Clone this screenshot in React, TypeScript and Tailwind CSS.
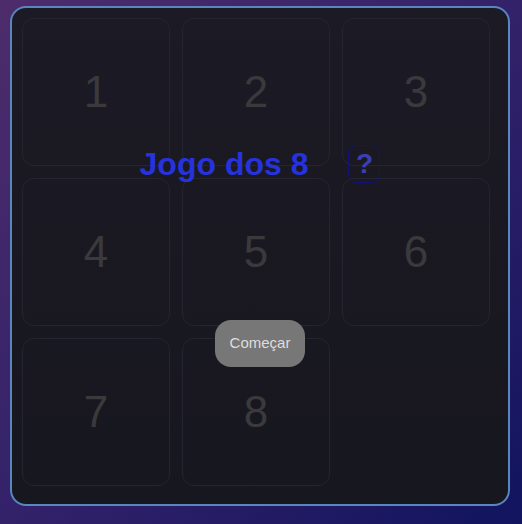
import React from "react";

export default function App() {
  const tiles = [1, 2, 3, 4, 5, 6, 7, 8, null];
  return (
    <div
      className="w-[522px] h-[524px] bg-[linear-gradient(135deg,#4d2c6b_0%,#33226a_50%,#11145e_100%)] pl-[10px] pt-[6px]"
      style={{ fontFamily: '"Liberation Sans", Arial, sans-serif' }}
    >
      <div className="relative w-[500px] h-[500px] rounded-[16px] border-2 border-[#5a86bf] bg-[linear-gradient(180deg,#1c1a24_0%,#17171f_100%)] p-[10px]">
        <div className="grid grid-cols-[repeat(3,148px)] grid-rows-[repeat(3,148px)] gap-[12px]">
          {tiles.map((t, i) =>
            t === null ? (
              <div key={i} />
            ) : (
              <div
                key={i}
                className="flex items-center justify-center rounded-[12px] border border-[#25252f] text-[44px] text-[#3a3a3c]"
              >
                {t}
              </div>
            )
          )}
        </div>
        <div className="absolute inset-0 flex flex-col items-center justify-center gap-[137px]">
          <div className="flex items-center gap-[40px] h-[38px]">
            <span className="text-[32px] font-bold text-[#2633dd] leading-none">Jogo dos 8</span>
            <button className="w-[32px] h-[38px] rounded-[8px] border border-[#12127a] text-[28px] font-bold text-[#3a3fb8] leading-none flex items-center justify-center">
              ?
            </button>
          </div>
          <button className="h-[47px] px-[15px] rounded-[16px] bg-[#777777] text-[15px] text-[#dedede]">
            Começar
          </button>
        </div>
      </div>
    </div>
  );
}
